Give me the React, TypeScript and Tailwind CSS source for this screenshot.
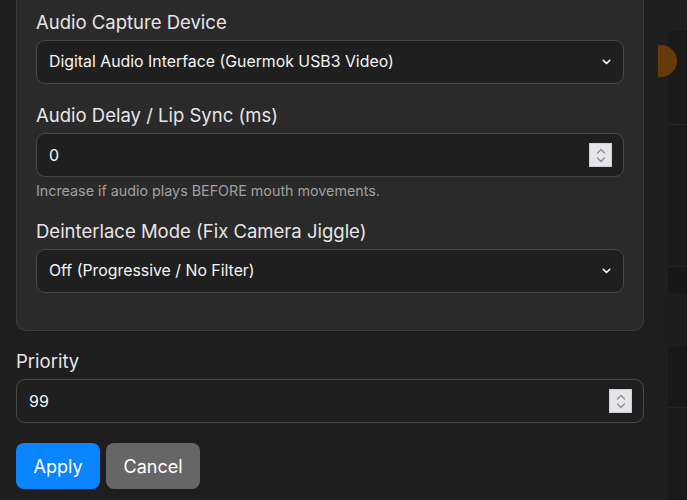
import React from "react";

const font = { fontFamily: 'Inter, "Liberation Sans", Arial, sans-serif' };

function Chevron() {
  return (
    <svg width="9" height="6" viewBox="0 0 9 6" className="shrink-0">
      <path d="M1.3 1.3 L4.5 4.5 L7.7 1.3" fill="none" stroke="#f2f2f2" strokeWidth="1.7" strokeLinecap="round" strokeLinejoin="round" />
    </svg>
  );
}

function Spinner() {
  return (
    <div className="flex h-[22px] w-[21px] flex-col items-center justify-center gap-[3px] bg-[#e4e4e9] shadow-[0_0_0_1px_#cfcfd4]">
      <svg width="10" height="6" viewBox="0 0 10 6">
        <path d="M1.5 5 L5 1.5 L8.5 5" fill="none" stroke="#8e8e95" strokeWidth="1.3" strokeLinecap="round" />
      </svg>
      <svg width="10" height="6" viewBox="0 0 10 6">
        <path d="M1.5 1 L5 4.5 L8.5 1" fill="none" stroke="#8e8e95" strokeWidth="1.3" strokeLinecap="round" />
      </svg>
    </div>
  );
}

function Select({ value }: { value: string }) {
  return (
    <div className="flex h-[44px] items-center justify-between rounded-[9px] border border-[#484848] bg-[#1f1f1f] pl-[12px] pr-[12px] text-[15.85px] text-[#f4f4f4]">
      <span>{value}</span>
      <Chevron />
    </div>
  );
}

function NumberInput({ value }: { value: string }) {
  return (
    <div className="flex h-[44px] items-center justify-between rounded-[9px] border border-[#484848] bg-[#1f1f1f] pl-[12px] pr-[12px] text-[16px] text-[#f4f4f4]">
      <span>{value}</span>
      <Spinner />
    </div>
  );
}

function Label({ children }: { children: React.ReactNode }) {
  return <div className="mb-[6px] text-[18.5px] leading-[24px] text-[#e6e6e6]">{children}</div>;
}

export default function App() {
  return (
    <div style={font} className="flex h-[500px] w-[687px] overflow-hidden bg-[#1e1e1e]">
      <div className="w-[668px] shrink-0 pl-[16px] pr-[24px]">
        <div className="-mt-[10px] rounded-b-[10px] border border-t-0 border-[#3c3c3c] bg-[#2a2a2a] px-[19px] pb-[17px] pt-[20px]">
          <div className="mb-[19px]">
            <Label>Audio Capture Device</Label>
            <Select value="Digital Audio Interface (Guermok USB3 Video)" />
          </div>
          <div className="mb-[18px]">
            <Label>Audio Delay / Lip Sync (ms)</Label>
            <NumberInput value="0" />
            <div className="mt-[4px] text-[14.3px] leading-[20px] text-[#a0a0a0]">
              Increase if audio plays BEFORE mouth movements.
            </div>
          </div>
          <div className="mb-[20px]">
            <Label>Deinterlace Mode (Fix Camera Jiggle)</Label>
            <Select value="Off (Progressive / No Filter)" />
          </div>
        </div>

        <div className="mt-[18px]">
          <Label>Priority</Label>
          <NumberInput value="99" />
        </div>

        <div className="mt-[20px] flex gap-[6px]">
          <button className="h-[46px] w-[84px] rounded-[8px] bg-[#0a84ff] text-[18px] text-white">Apply</button>
          <button className="h-[46px] w-[94px] rounded-[8px] bg-[#666666] text-[18px] text-white">Cancel</button>
        </div>
      </div>

      <div className="flex flex-1 flex-col">
        <div className="h-[31px] bg-[#1e1e1e]" />
        <div className="relative h-[93px] bg-[#191919]">
          <div className="absolute left-[-10px] top-[14px] h-[32px] w-[19px] rounded-r-full bg-[#663b07]" />
        </div>
        <div className="h-px bg-[#262626]" />
        <div className="h-[141px] bg-[#191919]" />
        <div className="h-px bg-[#242424]" />
        <div className="h-[26px] bg-[#171717]" />
        <div className="h-[54px] bg-[#1d1d1d]" />
        <div className="h-[60px] bg-[#181818]" />
        <div className="h-px bg-[#232323]" />
        <div className="flex-1 bg-[#1a1a1a]" />
      </div>
    </div>
  );
}
